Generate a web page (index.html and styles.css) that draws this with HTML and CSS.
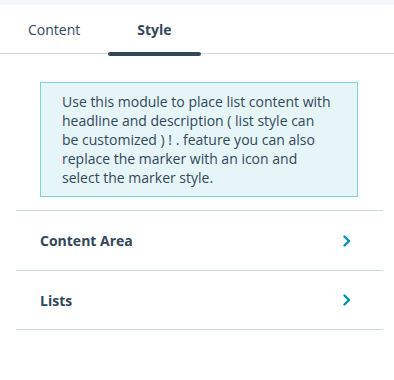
FILE: index.html
```html
<!DOCTYPE html>
<html lang="en">
<head>
    <meta charset="UTF-8">
    <meta name="viewport" content="width=device-width, initial-scale=1.0">
    <title>Module Style</title>
    <link rel="stylesheet" href="styles.css">
</head>
<body>

<div class="topbar"></div>

<div class="tabs">
    <div class="tab">Content</div>
    <div class="tab active">Style</div>
</div>

<div class="info-box">
    Use this module to place list content with<br>
    headline and description ( list style can<br>
    be customized ) ! . feature you can also<br>
    replace the marker with an icon and<br>
    select the marker style.
</div>

<div class="groups">
    <div class="group-row">
        <span class="group-title">Content Area</span>
        <svg class="chevron" width="8" height="12" viewBox="0 0 8 12">
            <path d="M1.5 1.5 L6 6 L1.5 10.5" fill="none" stroke="currentColor" stroke-width="2.4" stroke-linecap="round" stroke-linejoin="round"/>
        </svg>
    </div>
    <div class="group-row">
        <span class="group-title">Lists</span>
        <svg class="chevron" width="8" height="12" viewBox="0 0 8 12">
            <path d="M1.5 1.5 L6 6 L1.5 10.5" fill="none" stroke="currentColor" stroke-width="2.4" stroke-linecap="round" stroke-linejoin="round"/>
        </svg>
    </div>
</div>

</body>
</html>
```

FILE: styles.css
```css
:root {
    --text-dark: #33475b;
    --divider: #cbd6e2;
    --info-bg: #e5f5f8;
    --info-border: #7fd1de;
    --accent: #0091ae;
}

* {
    margin: 0;
    padding: 0;
    box-sizing: border-box;
}

body {
    font-family: 'Open Sans', sans-serif;
    color: var(--text-dark);
    background: #ffffff;
    font-size: 14px;
}

.topbar {
    height: 5px;
    background: #f5f8fa;
}

.tabs {
    display: flex;
    height: 49px;
    border-bottom: 1px solid var(--divider);
}

.tab {
    position: relative;
    padding: 0 28px;
    display: flex;
    align-items: center;
    font-size: 14px;
    color: var(--text-dark);
}

.tab.active {
    font-weight: 700;
    padding: 0 29px;
}

.tab.active::after {
    content: "";
    position: absolute;
    left: 0;
    right: 0;
    bottom: -3px;
    height: 4px;
    border-radius: 2px;
    background: #33475b;
}

.info-box {
    margin: 28px 36px 0 40px;
    padding: 9px 8px 9px 21px;
    background: var(--info-bg);
    border: 1px solid var(--info-border);
    line-height: 19px;
    font-size: 14px;
}

.groups {
    margin: 13px 11px 0 16px;
}

.group-row {
    display: flex;
    align-items: center;
    justify-content: space-between;
    height: 60px;
    padding: 0 32px 0 24px;
    border-top: 1px solid var(--divider);
}

.group-row:last-child {
    border-bottom: 1px solid var(--divider);
}

.group-title {
    font-weight: 700;
    font-size: 14px;
}

.chevron {
    color: var(--accent);
}
```
